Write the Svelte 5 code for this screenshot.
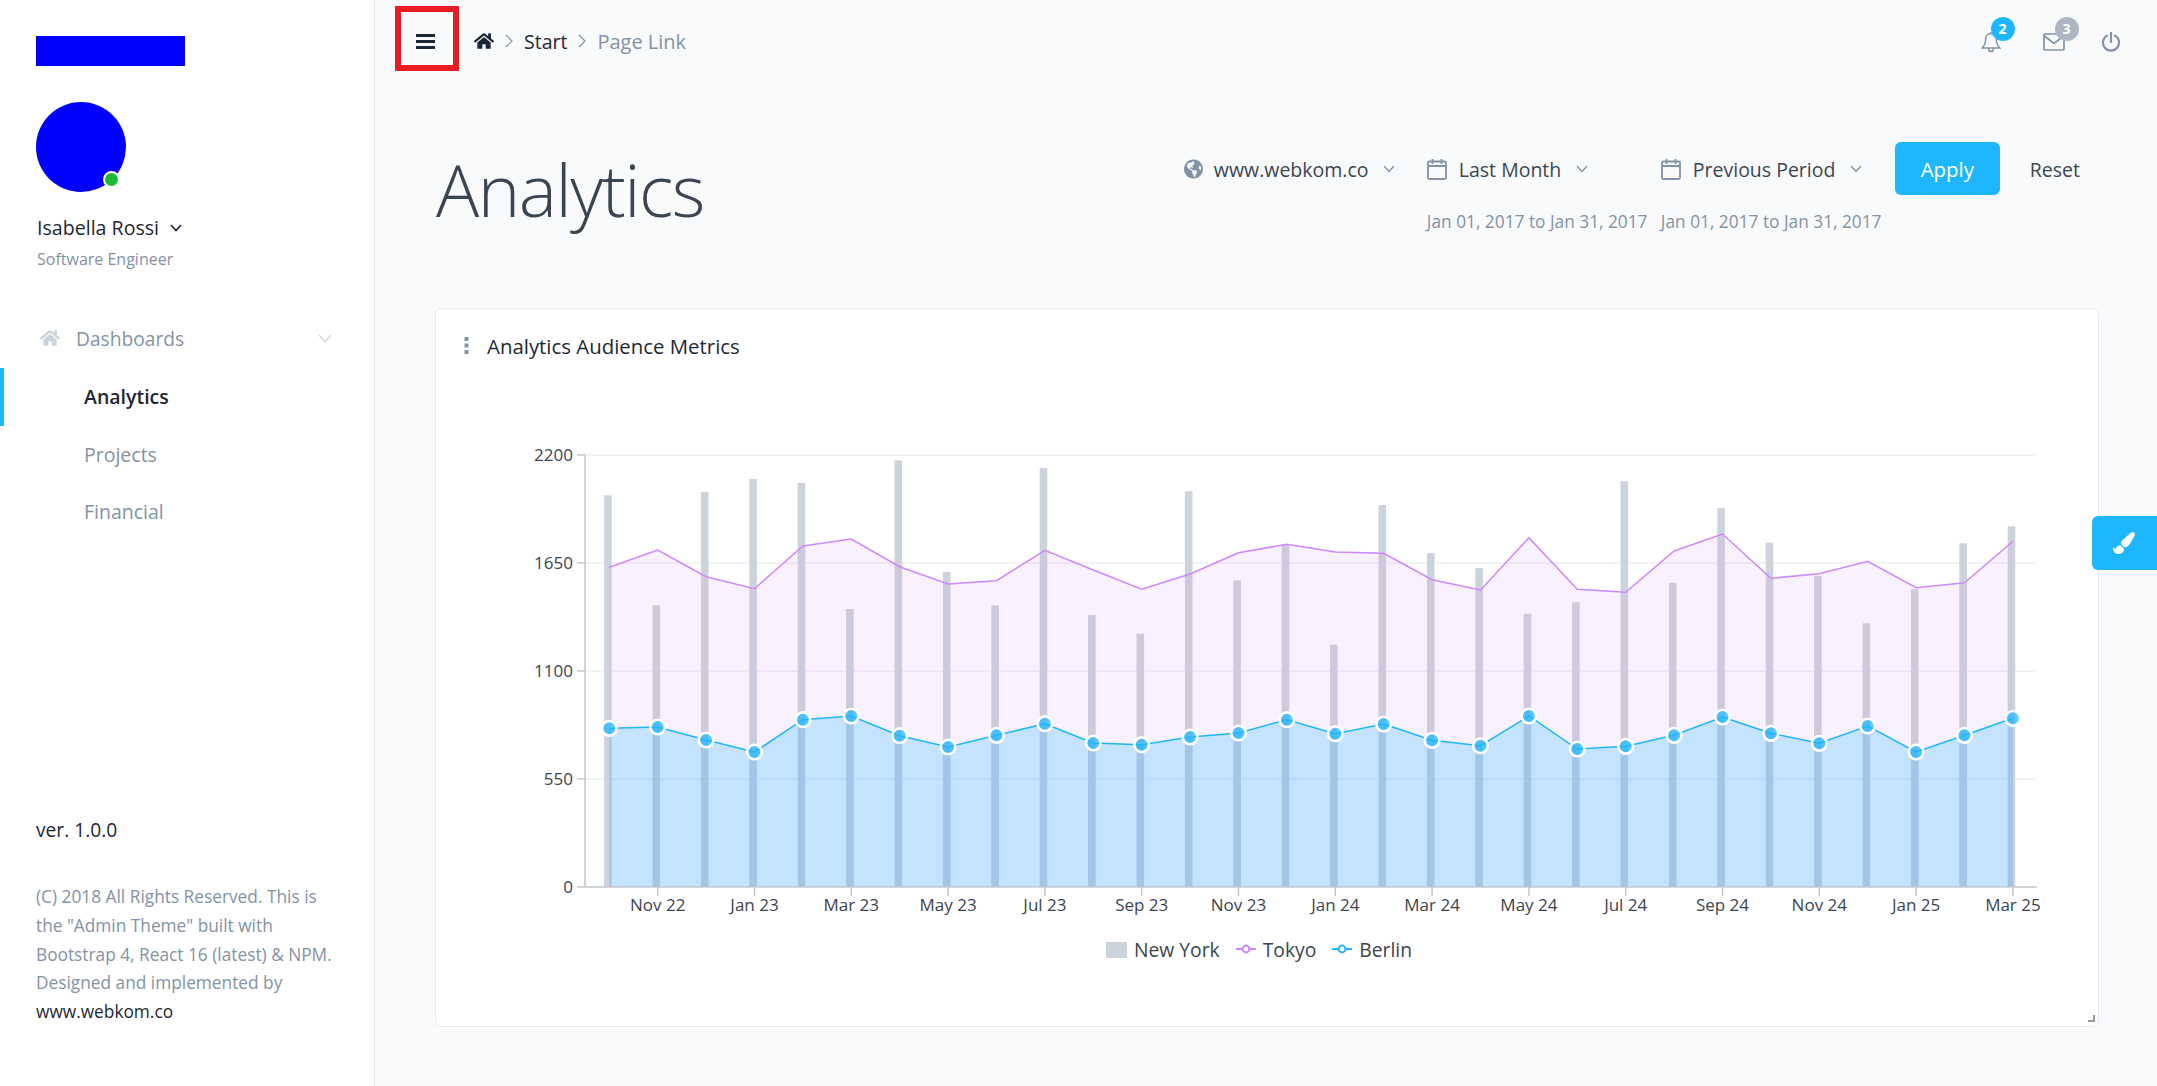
<script>
  const tokyoZ = [352,300,380,416,288,267,350,402,392,301,360,418,372,308,283,306,310,389,420,263,418,427,303,252,385,371,334,413,398,274];
  const berlinZ = [835,831,870,906,809,798,857,891,856,821,879,884,861,849,809,851,822,871,887,798,897,889,856,801,850,880,828,906,856,805];
  const barZ = [136,466,126,87,99,477,31,366,466,54,495,551,124,391,283,584,165,309,354,491,457,94,398,174,278,378,520,418,280,229];
  const toY = (z) => +(450 + z / 3).toFixed(1);
  const X = (i) => +(609.3 + 48.4 * i).toFixed(1);
  const base = 887;
  const tokyo = tokyoZ.map((z, i) => [X(i), toY(z)]);
  const berlin = berlinZ.map((z, i) => [X(i), toY(z)]);
  const bars = barZ.map((z, i) => ({ x: X(i) - 5.2, y: toY(z), h: base - toY(z) }));
  const line = (p) => p.map((q) => q.join(',')).join(' ');
  const area = (p) => `${p[0][0]},${base} ${line(p)} ${p[p.length - 1][0]},${base}`;
  const gridY = [455, 563, 671, 779];
  const yLabels = [[2200,455],[1650,563],[1100,671],[550,779],[0,887]];
  const months = ['Nov 22','Jan 23','Mar 23','May 23','Jul 23','Sep 23','Nov 23','Jan 24','Mar 24','May 24','Jul 24','Sep 24','Nov 24','Jan 25','Mar 25'];
  const ticks = months.map((m, k) => ({ m, x: X(1 + 2 * k) }));
  const nav = [
    { label: 'Analytics', active: true },
    { label: 'Projects', active: false },
    { label: 'Financial', active: false }
  ];
  const homeD = 'M280.37 148.26L96 300.11V464a16 16 0 0 0 16 16l112.06-.29a16 16 0 0 0 15.92-16V368a16 16 0 0 1 16-16h64a16 16 0 0 1 16 16v95.64a16 16 0 0 0 16 16.05L464 480a16 16 0 0 0 16-16V300L295.67 148.26a12.19 12.19 0 0 0-15.3 0zM571.6 251.47L488 182.56V44.05a12 12 0 0 0-12-12h-56a12 12 0 0 0-12 12v72.61L318.47 43a48 48 0 0 0-61 0L4.34 251.47a12 12 0 0 0-1.6 16.9l25.5 31A12 12 0 0 0 45.15 301l235.22-193.74a12.19 12.19 0 0 1 15.3 0L530.9 301a12 12 0 0 0 16.9-1.6l25.5-31a12 12 0 0 0-1.7-16.93z';
</script>

<div class="app">
  <aside class="side">
    <div class="logo"></div>
    <div class="avatar"><span class="dot"></span></div>
    <div class="name">Isabella Rossi
      <svg class="chev-s" viewBox="0 0 12 8"><polyline points="1,1 6,6.5 11,1" /></svg>
    </div>
    <div class="role">Software Engineer</div>
    <nav class="nav">
      <div class="nav-head">
        <svg class="nav-home" viewBox="0 0 576 512"><path d={homeD} /></svg>
        <span>Dashboards</span>
        <svg class="chev-n" viewBox="0 0 14 9"><polyline points="1,1 7,7.5 13,1" /></svg>
      </div>
      {#each nav as item}
        <div class="nav-item" class:active={item.active}>{item.label}</div>
      {/each}
    </nav>
    <div class="foot">
      <div class="ver">ver. 1.0.0</div>
      <p>(C) 2018 All Rights Reserved. This is the "Admin Theme" built with Bootstrap 4, React 16 (latest) &amp; NPM. Designed and implemented by <span class="link">www.webkom.co</span></p>
    </div>
  </aside>

  <main class="main">
    <header class="top">
      <div class="menu-box">
        <svg class="burger" viewBox="0 0 19 15"><rect width="19" height="3" /><rect y="6" width="19" height="3" /><rect y="12" width="19" height="3" /></svg>
      </div>
      <div class="crumbs">
        <svg class="crumb-home" viewBox="0 0 576 512"><path d={homeD} /></svg>
        <svg class="crumb-sep" viewBox="0 0 8 14"><polyline points="1,1 7,7 1,13" /></svg>
        <span class="c-dark">Start</span>
        <svg class="crumb-sep" viewBox="0 0 8 14"><polyline points="1,1 7,7 1,13" /></svg>
        <span class="c-mute">Page Link</span>
      </div>
      <div class="tools">
        <div class="tool bell">
          <svg viewBox="0 0 20 22"><path d="M10 2.6c-3.4 0-5.4 2.6-5.4 6 0 4.6-1.2 6.2-3.4 8.4h17.6c-2.2-2.2-3.4-3.8-3.4-8.4 0-3.4-2-6-5.4-6z M10 1v1.6 M7.6 17.4c0 2 1 3.2 2.4 3.2s2.4-1.2 2.4-3.2" /></svg>
          <span class="badge blue">2</span>
        </div>
        <div class="tool mail">
          <svg viewBox="0 0 22 18"><rect x="1" y="1" width="20" height="16" rx="1" /><polyline points="1.5,3 11,10.5 20.5,3" /></svg>
          <span class="badge gray">3</span>
        </div>
        <div class="tool power">
          <svg viewBox="0 0 20 20"><path d="M6 3.6a8 8 0 1 0 8 0 M10 1v9" /></svg>
        </div>
      </div>
    </header>

    <section class="head">
      <h1>Analytics</h1>
      <div class="filters">
        <div class="dd w-site">
          <svg class="globe" viewBox="0 0 496 512"><path d="M248 8C111.03 8 0 119.03 0 256s111.03 248 248 248 248-111.03 248-248S384.97 8 248 8zm82.29 357.6c-3.9 3.88-7.99 7.95-11.31 11.28-2.99 3-5.1 6.7-6.17 10.71-1.51 5.66-2.73 11.38-4.77 16.87l-17.39 46.85c-13.76 3-28 4.69-42.65 4.69v-27.38c1.69-12.62-7.64-36.26-22.63-51.25-6-6-9.37-14.14-9.37-22.63v-32.01c0-11.64-6.27-22.34-16.46-27.97-14.37-7.95-34.81-19.06-48.81-26.11-11.48-5.78-22.1-13.14-31.65-21.75l-.8-.72a114.792 114.792 0 0 1-18.06-20.74c-9.38-13.77-24.66-36.42-34.59-51.14 20.47-45.5 57.36-82.04 103.2-101.89l24.01 12.01C203.48 89.74 216 82.01 216 70.11v-11.3c7.99-1.29 16.12-2.11 24.39-2.42l28.3 28.3c6.25 6.25 6.25 16.38 0 22.63L264 112l-10.34 10.34c-3.12 3.12-3.12 8.19 0 11.31l4.69 4.69c3.12 3.12 3.12 8.19 0 11.31l-8 8a8.008 8.008 0 0 1-5.66 2.34h-8.99c-2.08 0-4.08.81-5.58 2.27l-9.92 9.65a8.008 8.008 0 0 0-1.58 9.31l15.59 31.19c2.66 5.32-1.21 11.58-7.15 11.58h-5.64c-1.93 0-3.79-.7-5.24-1.96l-9.28-8.06a16.017 16.017 0 0 0-15.55-3.1l-31.17 10.39a11.95 11.95 0 0 0-8.17 11.34c0 4.53 2.56 8.66 6.61 10.69l11.08 5.54c9.41 4.71 19.79 7.16 30.31 7.16s22.59 27.29 32 32h66.75c8.49 0 16.62 3.37 22.63 9.37l13.69 13.69a30.503 30.503 0 0 1 8.93 21.57 46.536 46.536 0 0 1-13.72 32.98zM417 274.25c-5.79-1.45-10.84-5-14.15-9.97l-17.98-26.97a23.97 23.97 0 0 1 0-26.62l19.59-29.38c2.32-3.47 5.5-6.29 9.24-8.15l12.98-6.49C440.2 193.59 448 223.87 448 256c0 8.67-.74 17.16-1.82 25.54L417 274.25z" /></svg>
          <span>www.webkom.co</span>
          <svg class="chev-f" viewBox="0 0 12 8"><polyline points="1,1 6,6.5 11,1" /></svg>
        </div>
        {#each ['Last Month', 'Previous Period'] as label}
          <div class="dcol">
            <div class="dd">
              <svg class="cal" viewBox="0 0 20 22"><rect x="1" y="3.5" width="18" height="17.5" rx="1.2" /><path d="M1 8h18 M5.5 1v5 M14.5 1v5" /></svg>
              <span>{label}</span>
              <svg class="chev-f" viewBox="0 0 12 8"><polyline points="1,1 6,6.5 11,1" /></svg>
            </div>
            <div class="range">Jan 01, 2017 to Jan 31, 2017</div>
          </div>
        {/each}
        <button class="apply">Apply</button>
        <span class="reset">Reset</span>
      </div>
    </section>

    <section class="card">
      <div class="card-head">
        <svg class="kebab" viewBox="0 0 5 17"><rect x="0.5" y="0" width="4" height="4" rx="0.6" /><rect x="0.5" y="6.5" width="4" height="4" rx="0.6" /><rect x="0.5" y="13" width="4" height="4" rx="0.6" /></svg>
        <span>Analytics Audience Metrics</span>
      </div>
      <svg class="chart" viewBox="436 420 1661 510">
        {#each gridY as y}
          <line x1="585" x2="2037" y1={y} y2={y} stroke="#eeeff4" stroke-width="1.5" />
        {/each}
        {#each bars as b}
          <rect x={b.x} y={b.y} width="7.6" height={b.h} fill="#cdd3da" />
        {/each}
        <polygon points={area(tokyo)} fill="#cc88ff" fill-opacity="0.12" />
        <polyline points={line(tokyo)} fill="none" stroke="#cc88ff" stroke-width="1.5" />
        <polygon points={area(berlin)} fill="#1eb7ff" fill-opacity="0.24" />
        <polyline points={line(berlin)} fill="none" stroke="#1eb7ff" stroke-width="1.5" />
        {#each berlin as p}
          <circle cx={p[0]} cy={p[1]} r="7.3" fill="#1eb7ff" fill-opacity="0.7" stroke="#fff" stroke-width="2.6" />
        {/each}
        <line x1="585" x2="585" y1="455" y2="887" stroke="#c3c7cc" stroke-width="1.5" />
        <line x1="585" x2="2037" y1="887" y2="887" stroke="#c3c7cc" stroke-width="1.5" />
        {#each yLabels as [v, y]}
          <line x1="577" x2="585" y1={y} y2={y} stroke="#c3c7cc" stroke-width="1.5" />
          <text class="tk" x="573" y={y + 5.5} text-anchor="end">{v}</text>
        {/each}
        {#each ticks as t}
          <line x1={t.x} x2={t.x} y1="887" y2="896" stroke="#c3c7cc" stroke-width="1.5" />
          <text class="tk" x={t.x} y="911" text-anchor="middle">{t.m}</text>
        {/each}
      </svg>
      <div class="legend">
        <span class="sq"></span><span class="lg-t">New York</span>
        <svg class="mark" viewBox="0 0 20 10"><line x1="0" x2="20" y1="5" y2="5" stroke="#cc88ff" stroke-width="2" /><circle cx="10" cy="5" r="3.4" fill="#fff" stroke="#cc88ff" stroke-width="2" /></svg>
        <span class="lg-t">Tokyo</span>
        <svg class="mark" viewBox="0 0 20 10"><line x1="0" x2="20" y1="5" y2="5" stroke="#1eb7ff" stroke-width="2" /><circle cx="10" cy="5" r="3.4" fill="#fff" stroke="#1eb7ff" stroke-width="2" /></svg>
        <span class="lg-t">Berlin</span>
      </div>
      <svg class="grip" viewBox="0 0 7 7"><path d="M5 0h2v7H0V5h5z" /></svg>
    </section>
  </main>

  <div class="paint">
    <svg viewBox="0 0 512 512"><path d="M167.02 309.34c-40.12 2.58-76.53 17.86-97.19 72.3-2.35 6.21-8 9.98-14.59 9.98-11.11 0-45.46-27.67-55.25-34.35C0 439.62 37.93 512 128 512c75.86 0 128-43.77 128-120.19 0-3.11-.65-6.08-.97-9.13l-88.01-73.34zM457.89 0c-15.16 0-29.37 6.71-40.21 16.45C213.27 199.05 192 203.34 192 257.09c0 13.7 3.25 26.76 8.73 38.7l63.82 53.18c7.21 1.8 14.64 3.03 22.39 3.03 62.11 0 98.11-45.47 211.16-256.46 7.38-14.35 13.9-29.85 13.9-45.99C512 20.64 486 0 457.89 0z" /></svg>
  </div>
</div>

<style>
  :global(body) { margin: 0; background: #f9fafc; }
  .app {
    display: flex; width: 2157px; height: 1086px; overflow: hidden; position: relative;
    font-family: "Open Sans", "Noto Sans", sans-serif; font-size: 19.5px; color: #1d2736; background: #f9fafc;
  }
  svg { display: block; flex: none; }

  .side {
    box-sizing: border-box; width: 375px; height: 1086px; flex: none; background: #fff;
    border-right: 1px solid #e4e7ec; padding: 36px 0 0; display: flex; flex-direction: column;
  }
  .logo { width: 149px; height: 30px; background: #00f; margin-left: 36px; }
  .avatar { position: relative; width: 90px; height: 90px; border-radius: 50%; background: #00f; margin: 36px 0 0 36px; }
  .dot {
    position: absolute; left: 67px; top: 69px; width: 13px; height: 13px; border-radius: 50%;
    background: #1bb934; border: 2px solid #fff; box-sizing: content-box;
  }
  .name { display: flex; align-items: center; gap: 11px; margin: 22px 0 0 37px; height: 28px; line-height: 28px; font-size: 19.6px; }
  .chev-s { width: 12px; height: 8px; fill: none; stroke: #1d2736; stroke-width: 1.7; }
  .role { margin: 5px 0 0 37px; font-size: 16px; line-height: 24px; color: #8492a6; }
  .nav { margin-top: 39px; }
  .nav-head { display: flex; align-items: center; height: 58px; box-sizing: border-box; padding: 0 0 2px 40px; color: #8492a6; font-size: 19.2px; }
  .nav-home { width: 20px; height: 18px; fill: #cdd3da; margin-right: 16px; }
  .chev-n { width: 14px; height: 9px; margin-left: auto; margin-right: 42px; fill: none; stroke: #cdd3da; stroke-width: 1.4; }
  .nav-item { box-sizing: border-box; height: 57.5px; line-height: 57px; padding-left: 84px; color: #8492a6; font-size: 19.5px; }
  .nav-item.active { color: #1d2736; box-shadow: inset 4px 0 0 #1eb7ff; font-weight: 600; }
  .foot { margin-top: auto; padding: 0 36px 59px; }
  .ver { font-size: 19.2px; line-height: 28px; margin-bottom: 39px; }
  .foot p { margin: 0; font-size: 17.3px; line-height: 28.8px; color: #8492a6; width: 302px; }
  .link { color: #1d2736; }

  .main { flex: 1; min-width: 0; padding: 0 58px 0 20px; box-sizing: border-box; }
  .top { display: flex; align-items: flex-start; height: 77px; padding-top: 6px; box-sizing: border-box; }
  .menu-box {
    box-sizing: border-box; width: 64px; height: 65px; border: 6px solid #e91c23;
    display: flex; align-items: center; justify-content: center;
  }
  .burger { width: 19px; height: 15px; fill: #1d2736; margin-left: -3px; margin-top: 5px; }
  .crumbs { display: flex; align-items: center; height: 70px; margin-left: 15px; font-size: 19.5px; }
  .crumb-home { width: 20px; height: 18px; fill: #1d2736; }
  .crumb-sep { width: 8px; height: 14px; margin: 0 11px; fill: none; stroke: #8492a6; stroke-width: 1.2; }
  .c-mute { color: #8492a6; font-size: 20px; }
  .tools { margin-left: auto; display: flex; align-items: center; height: 72px; }
  .tool { position: relative; }
  .bell { margin-right: 42px; }
  .bell svg { width: 20px; height: 22px; fill: none; stroke: #8492a6; stroke-width: 1.5; }
  .mail { margin-right: 36.5px; }
  .mail svg { width: 22px; height: 18px; fill: none; stroke: #8492a6; stroke-width: 1.7; }
  .power { margin-right: -22px; }
  .power svg { width: 20px; height: 20px; fill: none; stroke: #8492a6; stroke-width: 2.2; stroke-linecap: round; }
  .badge {
    position: absolute; width: 24px; height: 24px; border-radius: 50%; color: #fff;
    font-size: 14px; font-weight: 700; line-height: 24px; text-align: center; top: -14px; left: 10px;
  }
  .blue { background: #1eb7ff; }
  .gray { background: #adb6c2; }
  .mail .badge { top: -16px; left: 12px; }

  .head { display: flex; justify-content: space-between; align-items: flex-start; height: 231px; box-sizing: border-box; padding: 65px 0 0 41px; }
  h1 { margin: 11px 0 0 0; font-size: 72px; font-weight: 300; line-height: 72px; color: #3b4552; letter-spacing: -1.5px; }
  .filters { display: flex; align-items: flex-start; font-size: 19.5px; }
  .dd { display: flex; align-items: center; height: 53px; box-sizing: border-box; padding-top: 1px; color: #3b4552; }
  .w-site { width: 243px; }
  .dcol { width: 234px; }
  .globe { width: 19px; height: 20px; fill: #8492a6; margin-right: 11px; }
  .cal { width: 20px; height: 22px; fill: none; stroke: #8492a6; stroke-width: 1.8; margin-right: 12px; }
  .chev-f { width: 12px; height: 8px; margin-left: 15px; fill: none; stroke: #8492a6; stroke-width: 1.3; }
  .range { font-size: 17.3px; color: #8492a6; line-height: 24px; margin-top: 15px; white-space: nowrap; }
  .apply {
    width: 105px; height: 53px; border: 0; border-radius: 6px; background: #1eb7ff; color: #fff;
    font: inherit; font-size: 20.4px; padding: 0;
  }
  .reset { height: 53px; box-sizing: border-box; display: flex; align-items: center; padding: 1px 19px 0 30px; color: #3b4552; }

  .card {
    position: relative; box-sizing: border-box; height: 719px; margin-left: 40px; background: #fff;
    border: 1px solid #e6e9ee; border-radius: 6px;
  }
  .card-head { display: flex; align-items: center; height: 73px; padding-left: 28px; gap: 18px; font-size: 20.4px; margin-bottom: 38px; }
  .kebab { width: 5px; height: 17px; fill: #8492a6; }
  .chart { width: 1661px; height: 510px; }
  .tk { font-family: "Open Sans", "Noto Sans", sans-serif; font-size: 17px; fill: #3b4552; }
  .legend { display: flex; align-items: center; height: 38px; padding-left: 670px; font-size: 19.3px; color: #3b4552; }
  .sq { width: 21px; height: 16px; background: #cdd3da; margin: 2px 7px 0 0; }
  .mark { width: 20px; height: 10px; margin: 0 7px 0 16px; }
  .grip { position: absolute; right: 3px; bottom: 4px; width: 7px; height: 7px; fill: #999; }

  .paint {
    position: absolute; right: 0; top: 516px; width: 65px; height: 54px; background: #1eb7ff;
    border-radius: 6px 0 0 6px; display: flex; align-items: center; justify-content: center;
  }
  .paint svg { width: 22px; height: 22px; fill: #fff; margin-left: -1px; }
</style>
